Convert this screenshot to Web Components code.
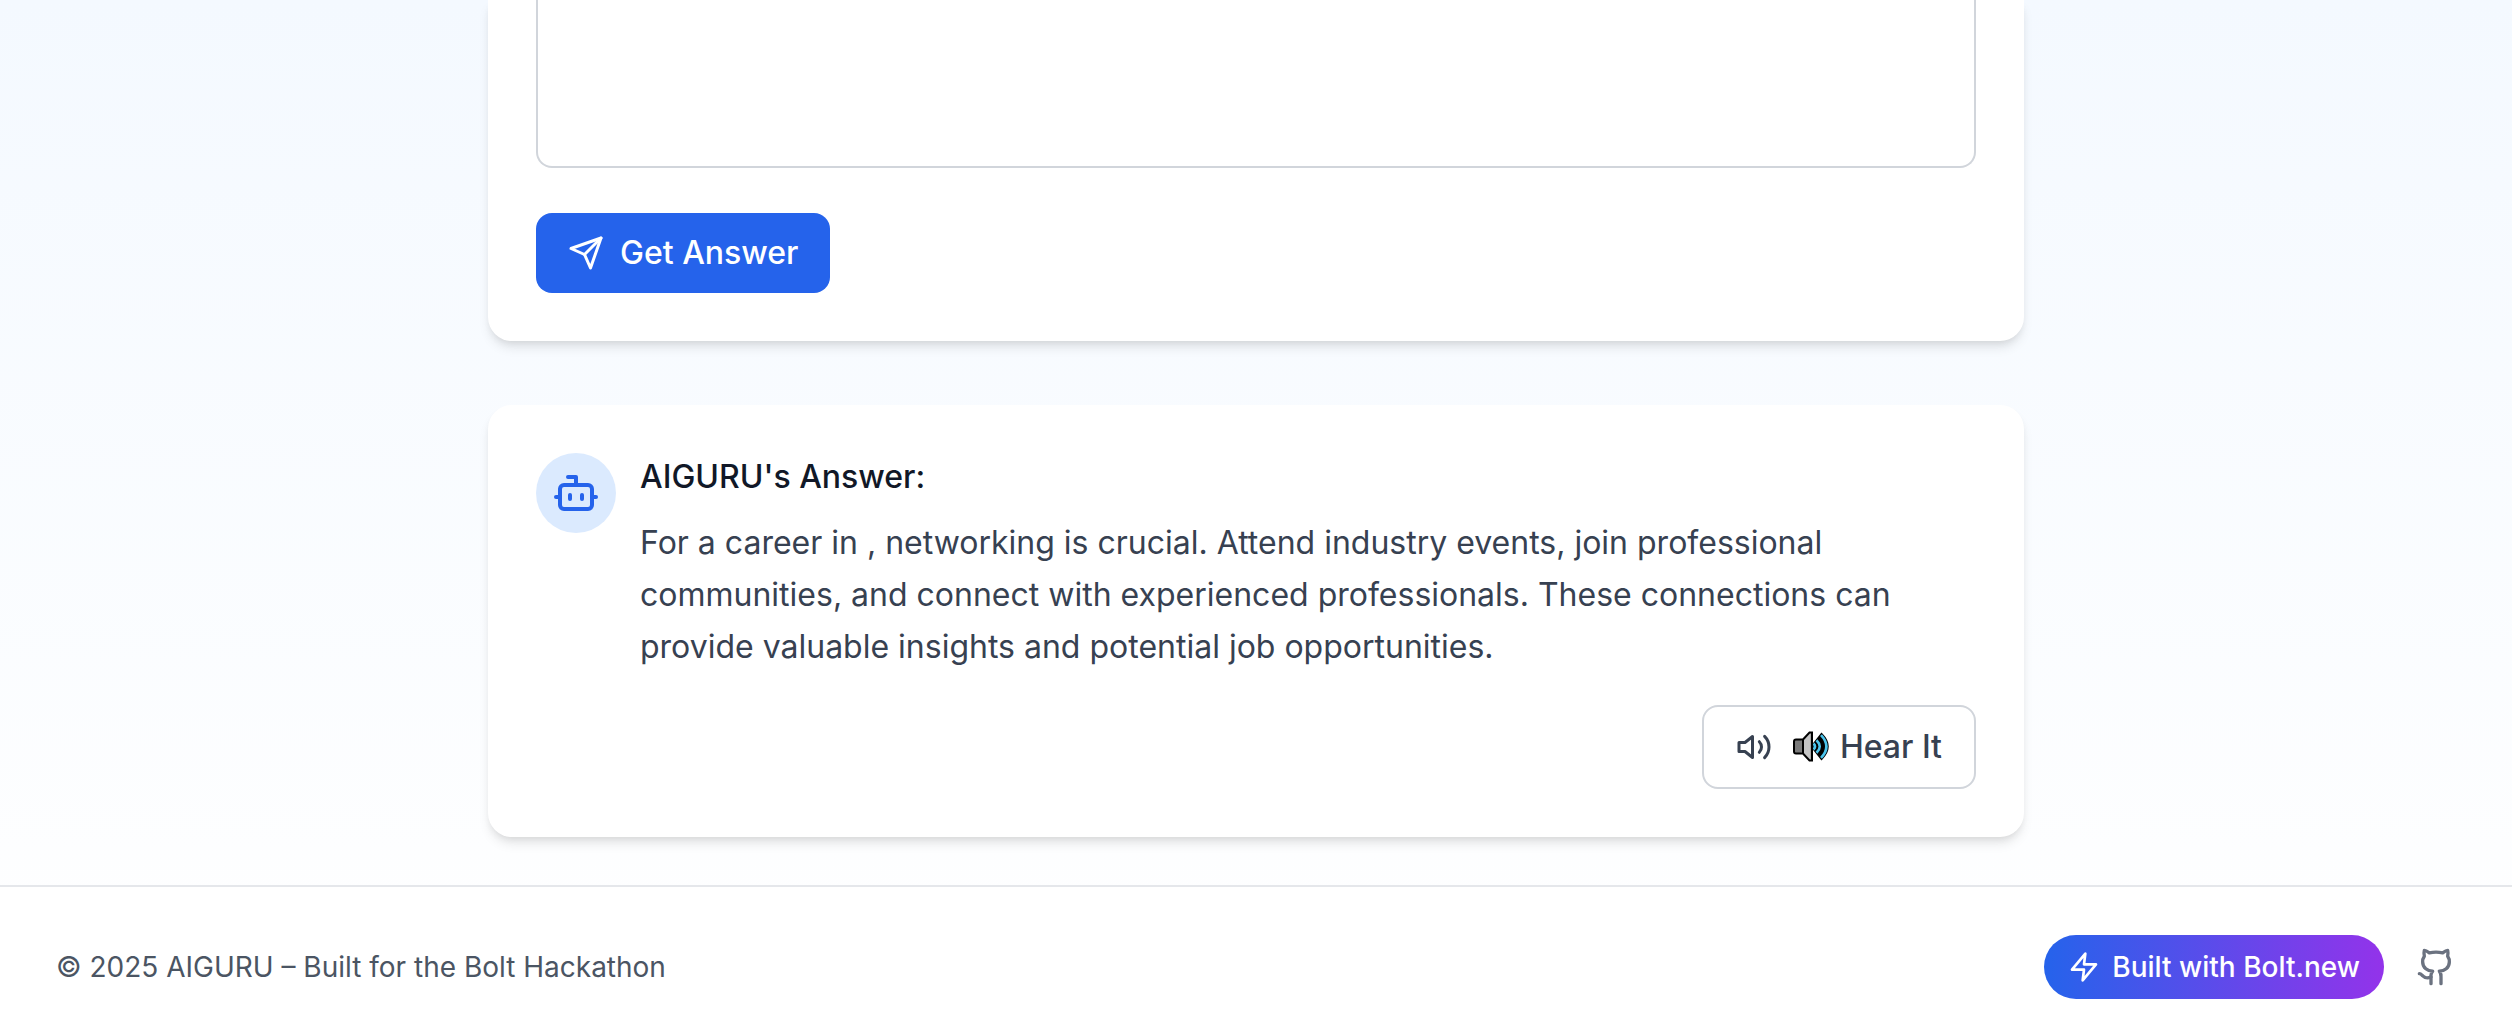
<!DOCTYPE html>
<html lang="en">
<head>
  <meta charset="utf-8">
  <meta name="viewport" content="width=device-width, initial-scale=1">
  <title>AIGURU</title>
  <style>
    body {
      margin: 0;
      min-height: 100vh;
      display: flex;
      flex-direction: column;
      font-family: Inter, "Liberation Sans", sans-serif;
      font-size: 32px;
      line-height: 48px;
      color: #111827;
      background: linear-gradient(to bottom, #f4f9ff, #ffffff);
    }
    main {
      box-sizing: border-box;
      width: 100%;
      max-width: 1536px;
      margin: 0 auto;
      padding-bottom: 48px;
      display: flex;
      flex-direction: column;
      gap: 64px;
    }
  </style>
</head>
<body>
  <main>
    <question-form></question-form>
    <guru-answer heading="AIGURU's Answer:">For a career in , networking is crucial. Attend industry events, join professional communities, and connect with experienced professionals. These connections can provide valuable insights and potential job opportunities.</guru-answer>
  </main>
  <site-footer>© 2025 AIGURU – Built for the Bolt Hackathon</site-footer>

  <script>
    const icons = {
      send: '<path d="m22 2-7 20-4-9-9-4Z"/><path d="M22 2 11 13"/>',
      bot: '<path d="M12 8V4H8"/><rect width="16" height="12" x="4" y="8" rx="2"/><path d="M2 14h2"/><path d="M20 14h2"/><path d="M15 13v2"/><path d="M9 13v2"/>',
      volume: '<path d="M11 5 6 9H2v6h4l5 4Z"/><path d="M15.54 8.46a5 5 0 0 1 0 7.07"/><path d="M19.07 4.93a10 10 0 0 1 0 14.14"/>',
      zap: '<path d="M13 2 3 14h9l-1 8 10-12h-9l1-8z"/>',
      github: '<path d="M15 22v-4a4.8 4.8 0 0 0-1-3.5c3 0 6-2 6-5.5.08-1.25-.27-2.48-1-3.5.28-1.15.28-2.35 0-3.5 0 0-1 0-3 1.5-2.64-.5-5.36-.5-8 0C6 2 5 2 5 2c-.3 1.15-.3 2.35 0 3.5A5.403 5.403 0 0 0 4 9c0 3.5 3 5.5 6 5.5-.39.49-.68 1.05-.85 1.65-.17.6-.22 1.23-.15 1.85v4"/><path d="M9 18c-4.51 2-5-2-7-2"/>',
    };

    class UiIcon extends HTMLElement {
      constructor() {
        super();
        this.attachShadow({ mode: 'open' });
      }

      connectedCallback() {
        this.shadowRoot.innerHTML = `
          <style>
            :host {
              display: block;
              flex: none;
              width: 36px;
              height: 36px;
            }
            svg {
              display: block;
              width: 100%;
              height: 100%;
              fill: none;
              stroke: currentColor;
              stroke-width: 2;
              stroke-linecap: round;
              stroke-linejoin: round;
            }
          </style>
          <svg viewBox="0 0 24 24" aria-hidden="true">${icons[this.getAttribute('name')]}</svg>
        `;
      }
    }

    // Loudspeaker emoji, outlined in black
    class SpeakerEmoji extends HTMLElement {
      constructor() {
        super();
        this.attachShadow({ mode: 'open' });
        this.shadowRoot.innerHTML = `
          <style>
            :host {
              display: block;
              flex: none;
              width: 44px;
              height: 40px;
            }
            svg {
              display: block;
            }
          </style>
          <svg width="44" height="40" viewBox="0 0 44 40" aria-hidden="true">
            <path d="M24 19 33.500 7Q46 19.500 33.500 32L24 20Z" fill="#000" stroke="#000" stroke-width="2"/>
            <g fill="none" stroke="#4cc4ec" stroke-width="2.600">
              <path d="M25.500 16.500q3 3 0 6"/>
              <path d="M28.500 13.200q6.500 6.300 0 12.600"/>
              <path d="M33 8.200q10.800 11.300 0 22.600"/>
            </g>
            <path d="M15 13 22 6h2v27h-2l-7-7Z" fill="#c4c4c4"/>
            <path d="M22.500 6H24v27h-1.500Z" fill="#8c8c8c"/>
            <rect x="6" y="13" width="9" height="13" rx="2" fill="#7a7a7a"/>
            <path d="M15 12.500 21.500 5.500H24v28h-2.500L15 26.500H8q-2 0-2-2v-10q0-2 2-2ZM15 13v13" fill="none" stroke="#000" stroke-width="2"/>
          </svg>
        `;
      }
    }

    class UiButton extends HTMLElement {
      constructor() {
        super();
        this.attachShadow({ mode: 'open' });
        this.shadowRoot.innerHTML = `
          <style>
            :host {
              display: inline-flex;
            }
            button {
              display: inline-flex;
              align-items: center;
              margin: 0;
              padding: 16px 32px;
              border: 0;
              border-radius: 16px;
              background: #2563eb;
              color: #ffffff;
              font: inherit;
              font-weight: 500;
              cursor: pointer;
            }
            :host([variant="outline"]) button {
              border: 2px solid #d1d5db;
              background: #ffffff;
              color: #374151;
            }
            slot[name="icon"]::slotted(*) {
              margin-right: 16px;
            }
            slot[name="emoji"]::slotted(*) {
              margin-right: 8px;
            }
          </style>
          <button type="button"><slot name="icon"></slot><slot name="emoji"></slot><slot></slot></button>
        `;
      }
    }

    class UiCard extends HTMLElement {
      constructor() {
        super();
        this.attachShadow({ mode: 'open' });
        this.shadowRoot.innerHTML = `
          <style>
            :host {
              display: block;
              padding: 48px;
              border-radius: 24px;
              background: #ffffff;
              box-shadow: 0 8px 12px -2px rgba(0, 0, 0, 0.1), 0 4px 8px -4px rgba(0, 0, 0, 0.1);
            }
            :host([continued]) {
              padding-top: 0;
              border-radius: 0 0 24px 24px;
            }
          </style>
          <slot></slot>
        `;
      }
    }

    class QuestionForm extends HTMLElement {
      constructor() {
        super();
        this.attachShadow({ mode: 'open' });
        this.shadowRoot.innerHTML = `
          <style>
            :host {
              display: block;
            }
            form {
              display: flex;
              flex-direction: column;
              align-items: flex-start;
              gap: 45px;
            }
            textarea {
              box-sizing: border-box;
              display: block;
              width: 100%;
              height: 168px;
              margin: 0;
              padding: 24px 32px;
              border: 2px solid #d1d5db;
              border-top: 0;
              border-radius: 0 0 16px 16px;
              background: #ffffff;
              color: inherit;
              font: inherit;
              resize: none;
            }
          </style>
          <ui-card continued>
            <form>
              <textarea aria-label="Your question"></textarea>
              <ui-button><ui-icon slot="icon" name="send"></ui-icon>Get Answer</ui-button>
            </form>
          </ui-card>
        `;
      }
    }

    class GuruAnswer extends HTMLElement {
      constructor() {
        super();
        this.attachShadow({ mode: 'open' });
      }

      connectedCallback() {
        this.shadowRoot.innerHTML = `
          <style>
            :host {
              display: block;
            }
            .answer {
              display: flex;
              align-items: flex-start;
              gap: 24px;
            }
            .avatar {
              flex: none;
              display: flex;
              padding: 16px;
              border-radius: 50%;
              background: #dbeafe;
              color: #2563eb;
            }
            .avatar ui-icon {
              width: 48px;
              height: 48px;
            }
            .body {
              flex: 1;
            }
            h3 {
              margin: 0 0 16px;
              font-size: inherit;
              font-weight: 500;
            }
            p {
              margin: 0 0 32px;
              line-height: 52px;
              color: #374151;
            }
            .actions {
              display: flex;
              justify-content: flex-end;
            }
          </style>
          <ui-card>
            <div class="answer">
              <div class="avatar"><ui-icon name="bot"></ui-icon></div>
              <div class="body">
                <h3>${this.getAttribute('heading')}</h3>
                <p><slot></slot></p>
                <div class="actions">
                  <ui-button variant="outline"><ui-icon slot="icon" name="volume"></ui-icon><speaker-emoji slot="emoji"></speaker-emoji>Hear It</ui-button>
                </div>
              </div>
            </div>
          </ui-card>
        `;
      }
    }

    class SiteFooter extends HTMLElement {
      constructor() {
        super();
        this.attachShadow({ mode: 'open' });
        this.shadowRoot.innerHTML = `
          <style>
            :host {
              flex: 1;
              display: flex;
              align-items: flex-start;
              justify-content: space-between;
              padding: 48px 56px 0;
              border-top: 2px solid #e5e7eb;
              background: #ffffff;
              font-size: 28px;
              line-height: 40px;
              color: #4b5563;
            }
            p {
              margin: 0;
              padding: 12px 0;
            }
            nav {
              display: flex;
              align-items: center;
              gap: 32px;
            }
            .badge {
              display: flex;
              align-items: center;
              gap: 12px;
              padding: 12px 24px;
              border-radius: 32px;
              background: linear-gradient(to right, #2563eb, #9333ea);
              color: #ffffff;
              font-weight: 500;
              text-decoration: none;
            }
            .badge ui-icon {
              width: 32px;
              height: 32px;
            }
            .github {
              color: #6b7280;
            }
            .github ui-icon {
              width: 40px;
              height: 40px;
            }
          </style>
          <p><slot></slot></p>
          <nav>
            <a class="badge" href="#"><ui-icon name="zap"></ui-icon>Built with Bolt.new</a>
            <a class="github" href="#" aria-label="GitHub"><ui-icon name="github"></ui-icon></a>
          </nav>
        `;
      }
    }

    customElements.define('ui-icon', UiIcon);
    customElements.define('speaker-emoji', SpeakerEmoji);
    customElements.define('ui-button', UiButton);
    customElements.define('ui-card', UiCard);
    customElements.define('question-form', QuestionForm);
    customElements.define('guru-answer', GuruAnswer);
    customElements.define('site-footer', SiteFooter);
  </script>
</body>
</html>
